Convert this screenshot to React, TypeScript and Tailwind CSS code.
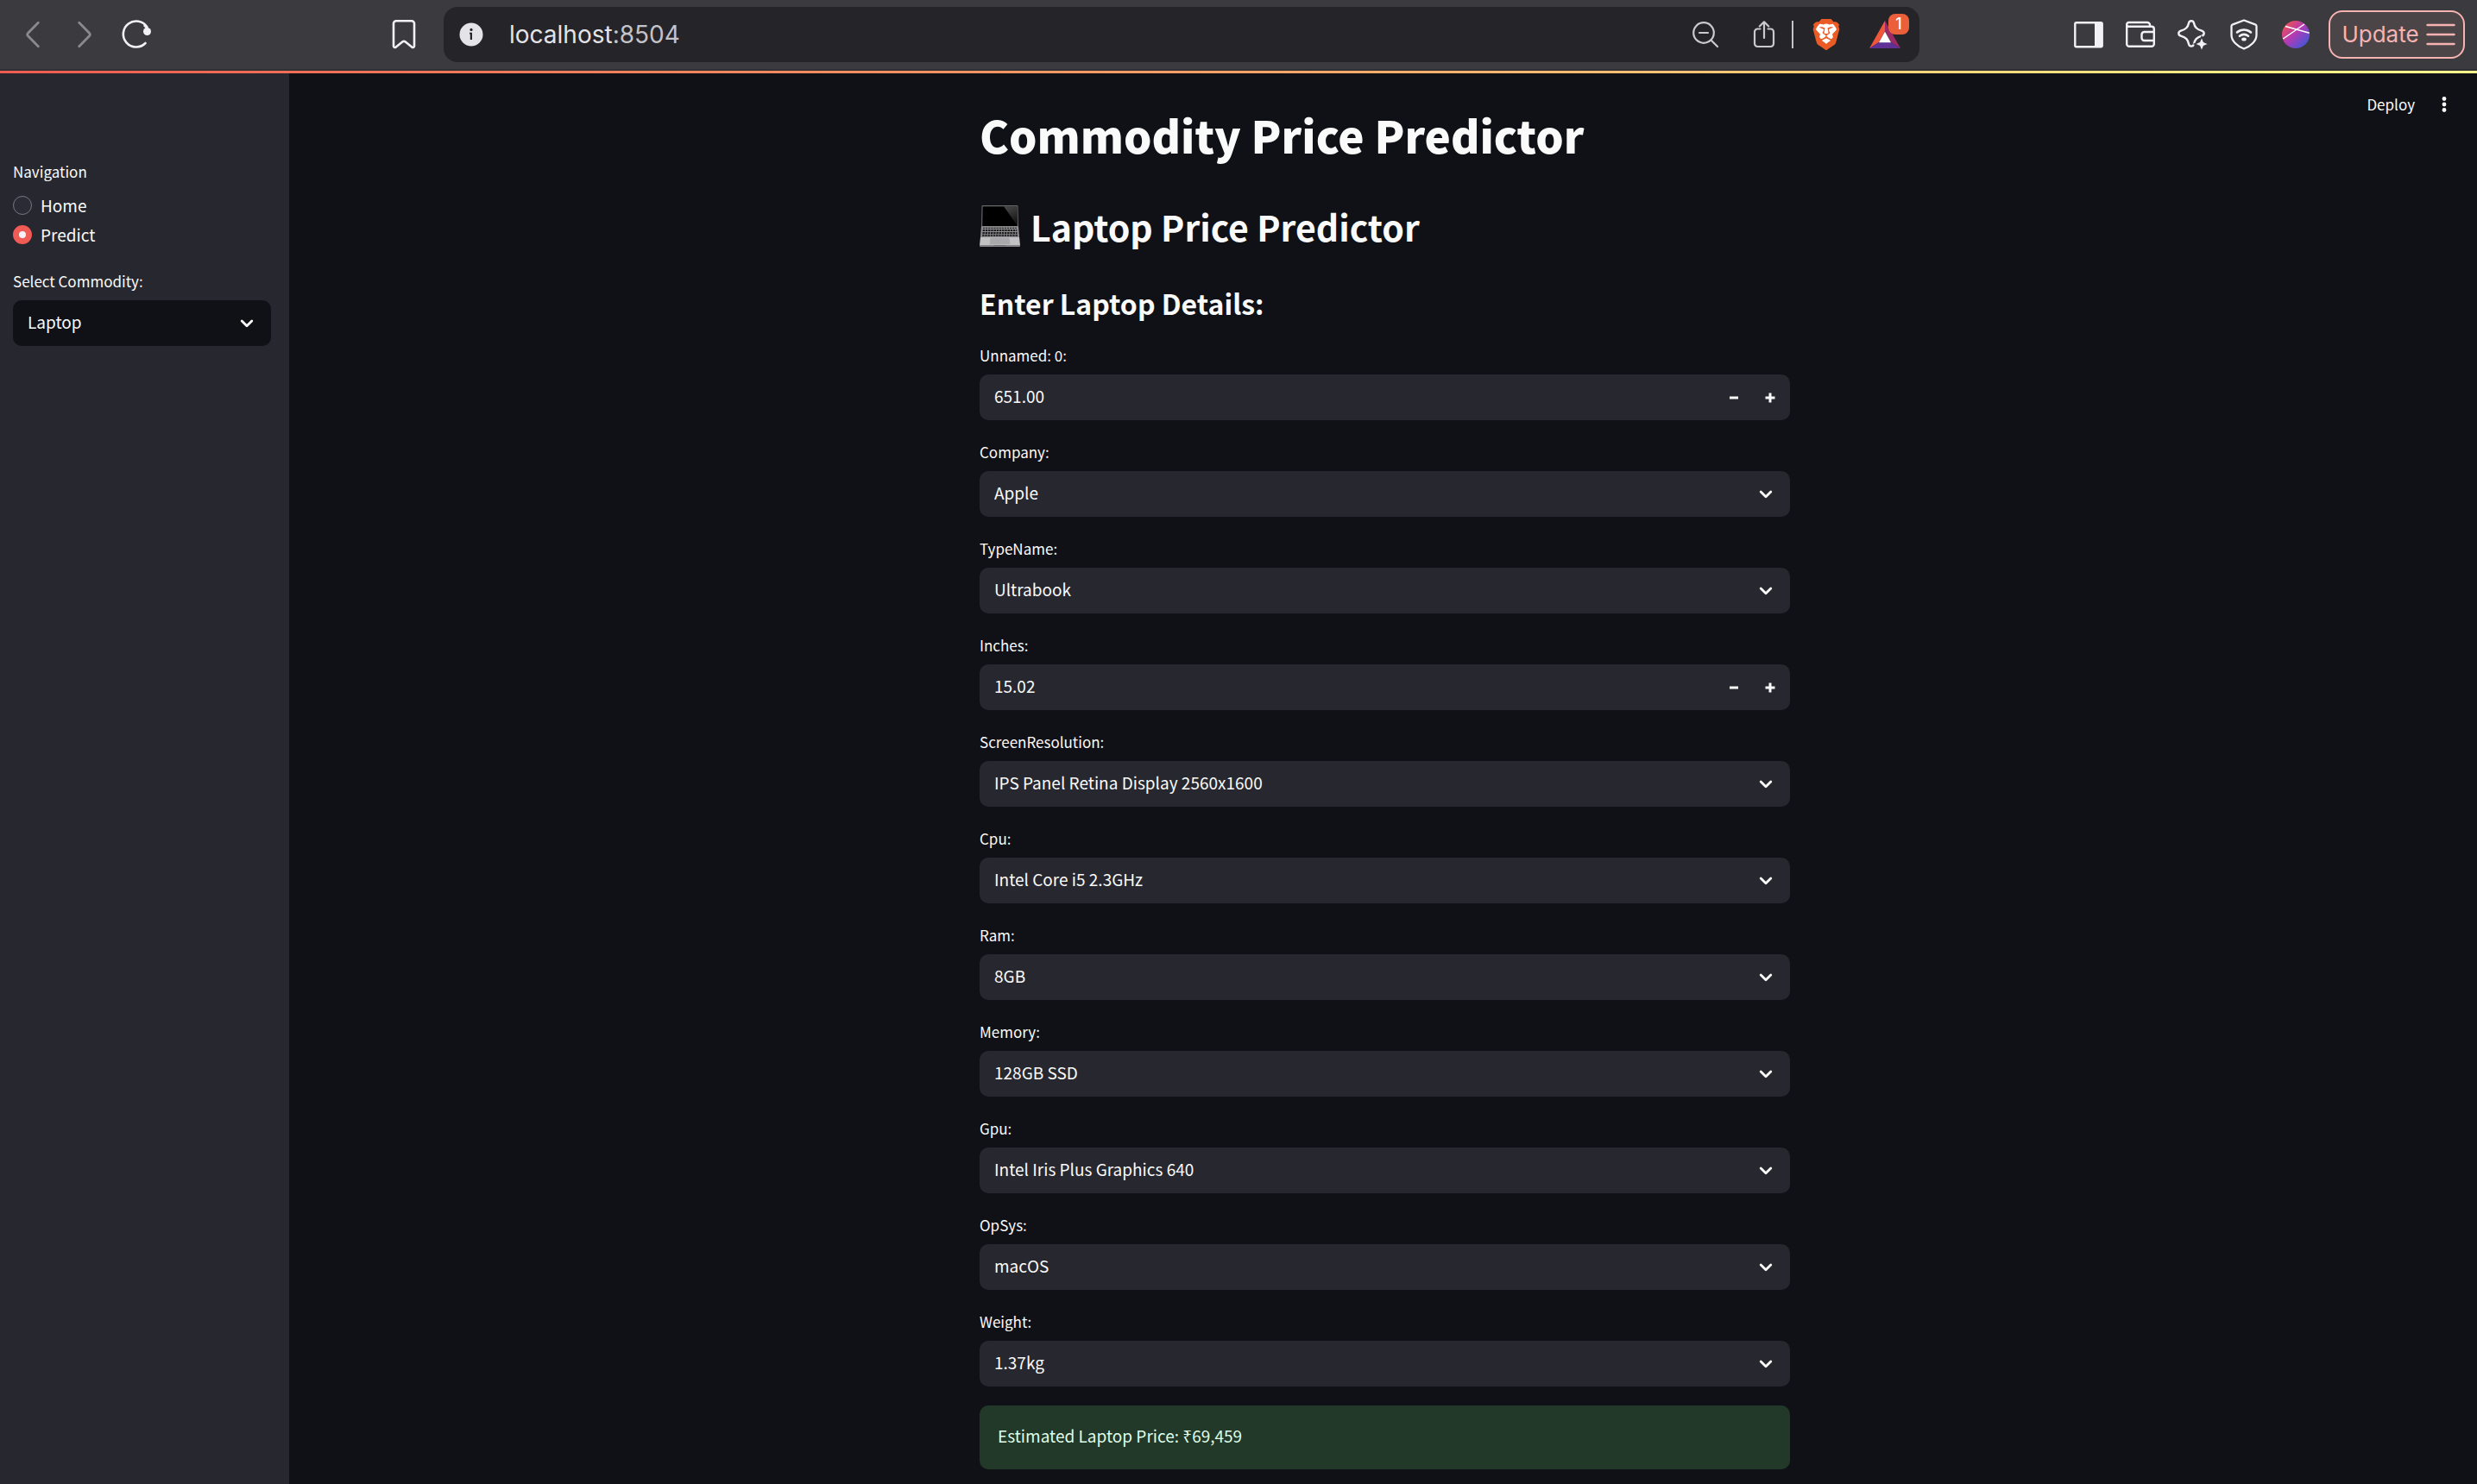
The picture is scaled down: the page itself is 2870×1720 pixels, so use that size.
import { useState, type ReactNode } from "react";
import { SiBrave } from "react-icons/si";

type Field = {
  id: string;
  label: string;
  value: string;
  kind: "number" | "select";
};

const FIELDS: Field[] = [
  { id: "unnamed", label: "Unnamed: 0:", value: "651.00", kind: "number" },
  { id: "company", label: "Company:", value: "Apple", kind: "select" },
  { id: "typename", label: "TypeName:", value: "Ultrabook", kind: "select" },
  { id: "inches", label: "Inches:", value: "15.02", kind: "number" },
  { id: "resolution", label: "ScreenResolution:", value: "IPS Panel Retina Display 2560x1600", kind: "select" },
  { id: "cpu", label: "Cpu:", value: "Intel Core i5 2.3GHz", kind: "select" },
  { id: "ram", label: "Ram:", value: "8GB", kind: "select" },
  { id: "memory", label: "Memory:", value: "128GB SSD", kind: "select" },
  { id: "gpu", label: "Gpu:", value: "Intel Iris Plus Graphics 640", kind: "select" },
  { id: "opsys", label: "OpSys:", value: "macOS", kind: "select" },
  { id: "weight", label: "Weight:", value: "1.37kg", kind: "select" },
];

function BarButton({ label, children }: { label: string; children: ReactNode }) {
  return (
    <button type="button" aria-label={label} className="flex h-16 w-[60px] items-center justify-center text-[#f2f2f5]">
      {children}
    </button>
  );
}

function BraveLion() {
  return (
    <span className="relative block size-9">
      <svg viewBox="0 0 24 24" className="absolute inset-0 size-9" aria-hidden="true">
        <path d="M6 3h12l3 5-3 9-6 4-6-4-3-9z" fill="#fff" />
      </svg>
      <SiBrave className="relative size-9 text-[#ea5b26]" aria-hidden="true" />
    </span>
  );
}

function AddressBar() {
  return (
    <div className="flex h-16 min-w-0 flex-1 items-center rounded-2xl bg-[#252429] pr-[22px] pl-[18px]">
      <button type="button" aria-label="Site information">
        <svg width="28" height="28" viewBox="0 0 28 28">
          <circle cx="14" cy="14" r="13.5" fill="#e3e3e8" />
          <circle cx="14" cy="8.4" r="1.6" fill="#252429" />
          <path d="M12 11.8h3V20h-2.2v-6.6H12z" fill="#252429" />
        </svg>
      </button>
      <div className="ml-[30px] flex-1 font-['Inter','Liberation_Sans',sans-serif] text-[28px] leading-8 text-[#e3e3e8]">
        localhost<span className="text-[#c3c3c9]">:8504</span>
      </div>
      <div className="flex items-center text-[#c9c9ce]">
        <button type="button" aria-label="Zoom out">
          <svg width="32" height="32" viewBox="0 0 32 32" fill="none" stroke="currentColor" strokeWidth="2.2">
            <circle cx="14" cy="14" r="11.8" />
            <path d="M9 14h10M22.5 22.5l7.5 7.5" strokeLinecap="round" />
          </svg>
        </button>
        <button type="button" aria-label="Share" className="ml-9">
          <svg width="32" height="32" viewBox="0 0 32 32" fill="none" stroke="currentColor" strokeWidth="2.2" strokeLinecap="round" strokeLinejoin="round">
            <path d="M16 20V1.5M10.8 6.5L16 1.3l5.2 5.2" />
            <path d="M11.5 9.5H8.4a3.4 3.4 0 0 0-3.4 3.4v13.7A3.4 3.4 0 0 0 8.400 30h15.200a3.400 3.400 0 0 0 3.400-3.400V12.900a3.400 3.400 0 0 0-3.400-3.400h-3.100" />
          </svg>
        </button>
        <span className="ml-4 h-8 w-0.5 bg-[#c3c3c9]" />
        <button type="button" aria-label="Brave Shields" className="ml-5">
          <BraveLion />
        </button>
        <button type="button" aria-label="Brave Rewards" className="relative ml-8">
          <svg width="36" height="32" viewBox="0 0 36 32">
            <path d="M18 0v12l-7 13L0 32z" fill="#f0563a" />
            <path d="M18 0l18 32-11-7-7-13z" fill="#9b2a66" />
            <path d="M0 32l11-7h14l11 7z" fill="#5f3096" />
            <path d="M18 12.500l7 12.800H11z" fill="#fff" />
          </svg>
          <span className="absolute -top-2 left-[22px] flex size-6 items-center justify-center rounded-lg bg-[#eb5f3b] font-['Inter',sans-serif] text-lg font-medium text-white">
            1
          </span>
        </button>
      </div>
    </div>
  );
}

function BrowserBar() {
  return (
    <header>
      <div className="flex h-[82px] items-center border-b-2 border-[#303035] bg-[#3b3a3f] pr-[14px] pl-2">
        <button type="button" aria-label="Back" className="flex h-16 w-[60px] items-center justify-center text-[#8a898e]">
          <svg width="16" height="32" viewBox="0 0 16 32" fill="none" stroke="currentColor" strokeWidth="2.800" strokeLinecap="round" strokeLinejoin="round">
            <path d="M14.300 2.300L2.300 14.600q-1.200 1.400 0 2.800L14.300 29.700" />
          </svg>
        </button>
        <button type="button" aria-label="Forward" className="flex h-16 w-[60px] items-center justify-center text-[#8a898e]">
          <svg width="16" height="32" viewBox="0 0 16 32" fill="none" stroke="currentColor" strokeWidth="2.800" strokeLinecap="round" strokeLinejoin="round">
            <path d="M1.700 2.300l12 12.300q1.200 1.400 0 2.800L1.700 29.700" />
          </svg>
        </button>
        <BarButton label="Reload">
          <svg width="36" height="36" viewBox="0 0 36 36" fill="none">
            <path d="M30.500 9.500A15 15 0 1 0 28.500 28" stroke="currentColor" strokeWidth="2.600" strokeLinecap="round" />
            <circle cx="30.500" cy="14.500" r="4.500" fill="currentColor" />
            <path d="M27 7l5 6" stroke="currentColor" strokeWidth="2.600" />
          </svg>
        </BarButton>
        <div className="mr-4 ml-[250px]">
          <BarButton label="Bookmark">
            <svg width="28" height="36" viewBox="0 0 28 36" fill="none" stroke="currentColor" strokeWidth="2.600" strokeLinejoin="round">
              <path d="M5 2.300h18a3 3 0 0 1 3 3v26c0 1.600-1.500 2.200-2.800 1.100l-7.400-5.900q-1.800-1.300-3.600 0l-7.400 5.900C3.500 33.500 2 32.900 2 31.300v-26a3 3 0 0 1 3-3z" />
            </svg>
          </BarButton>
        </div>
        <AddressBar />
        <div className="ml-[166px] flex items-center">
          <BarButton label="Toggle side panel">
            <svg width="34" height="32" viewBox="0 0 34 32">
              <rect x="1.300" y="2.300" width="31.400" height="28" rx="1.500" fill="none" stroke="currentColor" strokeWidth="2.400" />
              <path d="M24 2h9v28.500h-9z" fill="currentColor" />
            </svg>
          </BarButton>
          <BarButton label="Wallet">
            <svg width="34" height="32" viewBox="0 0 34 32" fill="none" stroke="currentColor" strokeWidth="2.400" strokeLinejoin="round">
              <path d="M28 6.500V5a3 3 0 0 0-3-3H3.500a2.300 2.300 0 0 0-2.300 2.300V27a2.800 2.800 0 0 0 2.800 2.800h26a2.800 2.800 0 0 0 2.800-2.800V9.600a2.800 2.800 0 0 0-2.800-2.800H3.500a2.300 2.300 0 0 1-2.300-2.300" />
              <path d="M32.500 13H21.500a3 3 0 0 0-3 3v4a3 3 0 0 0 3 3h11" />
            </svg>
          </BarButton>
          <BarButton label="Leo AI">
            <svg width="36" height="36" viewBox="0 0 36 36">
              <path d="M17 2.200c1.600 0 2.500.7 2.900 2.200 1.200 5.300 3 7.200 9.200 9.300 1.600.6 2.600 1.400 2.600 3s-1 2.400-2.600 3c-6.200 2-8 4-9.200 9.600-.4 1.500-1.300 2.300-2.900 2.300s-2.500-.8-2.900-2.300c-1.200-5.600-3-7.600-9.200-9.600-1.600-.6-2.600-1.400-2.600-3s1-2.400 2.600-3c6.200-2.100 8-4 9.200-9.300.4-1.500 1.300-2.200 2.900-2.200z" fill="none" stroke="currentColor" strokeWidth="2.400" />
              <path d="M29 20.500l2.500 6 6 2.500-6 2.500-2.500 6-2.500-6-6-2.500 6-2.500z" fill="currentColor" stroke="#3b3a3f" strokeWidth="1.500" />
            </svg>
          </BarButton>
          <BarButton label="VPN">
            <svg width="32" height="36" viewBox="0 0 32 36" fill="none" stroke="currentColor" strokeWidth="2.300" strokeLinecap="round" strokeLinejoin="round">
              <path d="M16 1.500l13 4.800c1 .4 1.500 1 1.500 2v10.200c0 7-6.500 13-14.500 16-8-3-14.500-9-14.500-16V8.300c0-1 .5-1.600 1.500-2z" />
              <path d="M8 15.500c4.800-4 11.200-4 16 0M11 19.800c3-2.400 7-2.400 10 0" strokeWidth="2.600" />
              <ellipse cx="16" cy="23.500" rx="2.800" ry="2" fill="currentColor" stroke="none" />
            </svg>
          </BarButton>
          <BarButton label="Profile">
            <svg width="32" height="32" viewBox="0 0 32 32">
              <defs>
                <linearGradient id="avatar" x1="0.1" y1="0.1" x2="0.9" y2="0.9">
                  <stop offset="0" stopColor="#ef5350" />
                  <stop offset="0.450" stopColor="#b53ab2" />
                  <stop offset="1" stopColor="#3f57dc" />
                </linearGradient>
              </defs>
              <circle cx="16" cy="16" r="16" fill="url(#avatar)" />
              <path d="M4 6.500L31.700 14.300M1.300 21L26 4" stroke="#fff" strokeWidth="1.500" />
            </svg>
          </BarButton>
          <button
            type="button"
            className="ml-2 flex h-14 w-[158px] items-center justify-center gap-2 rounded-2xl border-2 border-[#f7b3b1] bg-[#4b4548] pl-1 font-['Inter','Liberation_Sans',sans-serif] text-[26px] leading-8 text-[#f7b3b1]"
          >
            Update
            <svg width="34" height="28" viewBox="0 0 34 28" stroke="currentColor" strokeWidth="2.400" strokeLinecap="round" aria-hidden="true">
              <path d="M1.500 3h31M1.500 14h31M1.500 25h31" />
            </svg>
          </button>
        </div>
      </div>
      <div className="h-[3px] bg-linear-to-r from-[#ed5c51] via-[#f6a267] to-[#feff8c]" />
    </header>
  );
}

function SelectBox({ id, value, dark }: { id: string; value: string; dark?: boolean }) {
  return (
    <div className="relative">
      <select
        id={id}
        defaultValue={value}
        className={
          dark
            ? "h-[53px] w-full appearance-none rounded-[10px] bg-[#0f1116] pr-12 pb-0.5 pl-[17px] text-[#fafafa]"
            : "h-[53px] w-full appearance-none rounded-[10px] bg-[#27272f] pr-12 pb-0.5 pl-[17px] text-[#fafafa]"
        }
      >
        <option>{value}</option>
      </select>
      <svg
        className="pointer-events-none absolute top-[22px] right-5"
        width="16"
        height="10"
        viewBox="0 0 16 10"
        fill="none"
        stroke="#fafafa"
        strokeWidth="2.800"
        strokeLinecap="round"
        strokeLinejoin="round"
        aria-hidden="true"
      >
        <path d="M2.200 2l5.800 5.800L13.800 2" />
      </svg>
    </div>
  );
}

function NumberBox({ id, value }: { id: string; value: string }) {
  const [current, setCurrent] = useState(value);
  const step = (by: number) => setCurrent((Number(current) + by).toFixed(2));
  return (
    <div className="flex h-[53px] items-center rounded-[10px] bg-[#27272f] pr-0.5">
      <input
        id={id}
        type="text"
        inputMode="decimal"
        value={current}
        onChange={(e) => setCurrent(e.target.value)}
        className="h-full min-w-0 flex-1 bg-transparent pb-1 pl-[17px] text-[#fafafa]"
      />
      <button type="button" aria-label="Decrease" onClick={() => step(-0.01)} className="flex h-full w-[42px] items-center justify-center">
        <svg width="12" height="12" viewBox="0 0 12 12" aria-hidden="true">
          <path d="M1 4.500h10v3H1z" fill="#fafafa" />
        </svg>
      </button>
      <button type="button" aria-label="Increase" onClick={() => step(0.01)} className="flex h-full w-[42px] items-center justify-center">
        <svg width="12" height="12" viewBox="0 0 12 12" aria-hidden="true">
          <path d="M0.500 4.500h4v-4h3v4h4v3h-4v4h-3v-4h-4z" fill="#fafafa" />
        </svg>
      </button>
    </div>
  );
}

function Sidebar() {
  const [page, setPage] = useState("Predict");
  return (
    <aside className="w-[335px] shrink-0 bg-[#27272f] pt-[99px] pr-[21px] pl-[15px]">
      <fieldset>
        <legend className="mb-2 text-[17px] leading-[29px]">Navigation</legend>
        {["Home", "Predict"].map((name) => (
          <label key={name} className="flex h-[34px] items-center gap-[10px]">
            <input
              type="radio"
              name="page"
              checked={page === name}
              onChange={() => setPage(name)}
              className="size-[22px] appearance-none rounded-full border border-[#77777d] bg-[#2b2b35] checked:border-[7px] checked:border-[#f15b55] checked:bg-[#f4f4f8]"
            />
            <span className="leading-7">{name}</span>
          </label>
        ))}
      </fieldset>
      <label htmlFor="commodity" className="mt-[22px] mb-2 block text-[17px] leading-[29px]">
        Select Commodity:
      </label>
      <SelectBox id="commodity" value="Laptop" dark />
    </aside>
  );
}

function LaptopIcon() {
  return (
    <svg width="47" height="48" viewBox="0 0 47 48" aria-hidden="true">
      <defs>
        <linearGradient id="glare" x1="0" y1="0" x2="0.300" y2="1">
          <stop offset="0" stopColor="#4a4a4a" />
          <stop offset="1" stopColor="#161616" />
        </linearGradient>
      </defs>
      <path d="M3.500 0h40q1 0 1 1l.5 24H2L2.500 1q0-1 1-1z" fill="#6a6a6c" />
      <path d="M3.600 1.300h39.800l.4 22.700H3.200z" fill="#000" />
      <path d="M28 1.300h15.400l.4 22.200z" fill="url(#glare)" />
      <path d="M2 24.300h43L46 36.500H1z" fill="#8e8e91" />
      <path d="M4 26.300h39" stroke="#2a2a2c" strokeWidth="1.200" strokeDasharray="2.200 0.900" />
      <path d="M3.700 29h39.600M3.400 32h40.200M3.100 34.800h40.800" stroke="#1c1c1e" strokeWidth="1.900" strokeDasharray="2.400 0.800" />
      <path d="M1 36.500h45l1 10H0z" fill="#c2c2c4" />
      <path d="M12.500 37.500h22l.8 7.800H11.700z" fill="#a9a9ac" />
      <path d="M0 46.300h16l1 .7h13l1-.7h16v.9q0 .8-1 .8H1q-1 0-1-.8z" fill="#8a8a8d" />
    </svg>
  );
}

export default function App() {
  return (
    <div className="flex min-h-screen flex-col bg-[#0f1116] font-['Noto_Sans_CJK_SC','Noto_Sans',sans-serif] text-[19px] text-[#fafafa]">
      <BrowserBar />
      <div className="flex flex-1">
        <Sidebar />
        <main className="relative min-w-0 flex-1 pt-9 pb-[17px] pl-1">
          <div className="absolute top-5 right-8 flex items-center gap-7">
            <button type="button" className="text-[17px] leading-8">
              Deploy
            </button>
            <button type="button" aria-label="Main menu">
              <svg width="12" height="24" viewBox="0 0 12 24" fill="#fafafa">
                <circle cx="6" cy="5.500" r="2.400" />
                <circle cx="6" cy="12" r="2.400" />
                <circle cx="6" cy="18.500" r="2.400" />
              </svg>
            </button>
          </div>
          <form className="mx-auto max-w-[939px]" onSubmit={(e) => e.preventDefault()}>
            <h1 className="text-[51px] leading-[70px] font-black">Commodity Price Predictor</h1>
            <h2 className="mt-[42px] flex items-center gap-3 text-[41px] leading-[58px] font-semibold">
              <LaptopIcon />
              Laptop Price Predictor
            </h2>
            <h3 className="mt-[38px] mb-6 text-[32px] leading-[44px] font-semibold">Enter Laptop Details:</h3>
            <div className="flex flex-col gap-[22px]">
              {FIELDS.map((field) => (
                <div key={field.id}>
                  <label htmlFor={field.id} className="mb-2 block text-[17px] leading-[29px]">
                    {field.label}
                  </label>
                  {field.kind === "number" ? (
                    <NumberBox id={field.id} value={field.value} />
                  ) : (
                    <SelectBox id={field.id} value={field.value} />
                  )}
                </div>
              ))}
              <output className="block rounded-[10px] bg-[#223829] px-[21px] pt-[21px] pb-[25px] leading-7 text-[#dffde9]">
                Estimated Laptop Price: ₹69,459
              </output>
            </div>
          </form>
        </main>
      </div>
    </div>
  );
}
